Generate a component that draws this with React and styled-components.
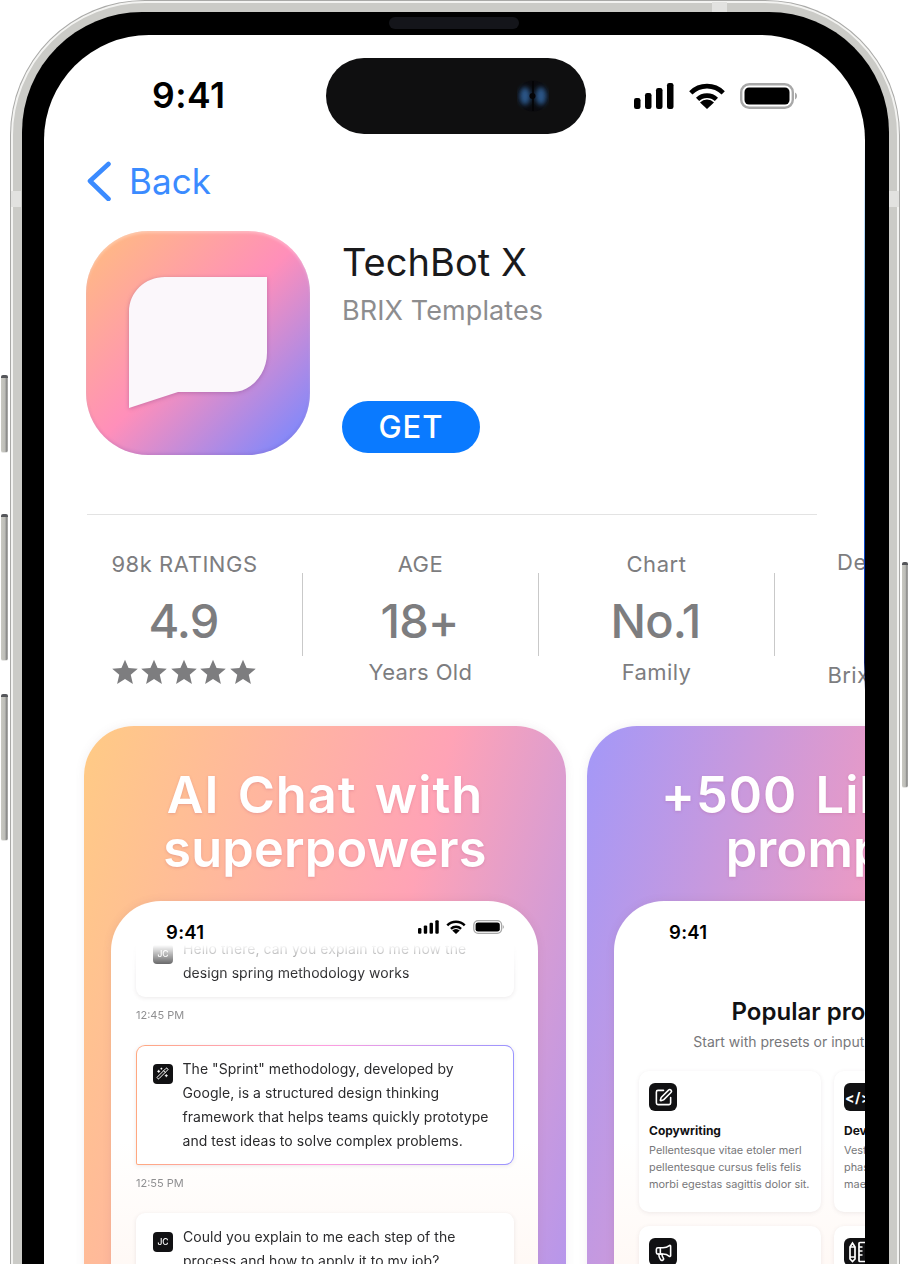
import React from "react";
import styled, { createGlobalStyle } from "styled-components";
import { SquarePen, Megaphone, WandSparkles } from "lucide-react";

const Global = createGlobalStyle`
  html, body { margin: 0; padding: 0; background: #fff; }
  * { box-sizing: border-box; }
  body { font-family: Inter, "Liberation Sans", sans-serif; }
`;

const Page = styled.div`
  position: relative;
  width: 908px;
  height: 1264px;
  overflow: hidden;
  background: #fff;
  padding: 1px 0 0 11px;
`;
const SideButton = styled.div`
  position: absolute;
  top: ${(p) => p.$top}px;
  height: ${(p) => p.$h}px;
  ${(p) => (p.$right ? "left: 902px; width: 6px;" : "left: 1px; width: 7px;")}
  border-radius: 2px;
  border-top: 3px solid #55565a;
  border-bottom: 1px solid #e6e6e4;
  background: linear-gradient(90deg, #c9c9c2 0%, #bdbdb8 55%, #808080 85%, #c9c9c5 100%);
`;
const Frame = styled.div`
  position: relative;
  width: 888px;
  height: 1500px;
  border: 2px solid #f3f3f1;
  border-radius: 134px;
  padding: 9px 8px 0 9px;
  background: #cbcbc7;
  box-shadow: 0 0 0 1px #a9a9a7;
`;
const AntennaBand = styled.div`
  position: absolute;
  background: #e2e2e0;
  ${(p) => p.$pos}
`;
const Bezel = styled.div`
  position: relative;
  width: 867px;
  height: 1480px;
  background: #000;
  border-radius: 120px;
  padding: 23px 24px 0 22px;
`;
const Speaker = styled.div`
  position: absolute;
  left: 367px;
  top: 5px;
  width: 130px;
  height: 12px;
  border-radius: 6px;
  background: #14151a;
`;
const Screen = styled.div`
  position: relative;
  width: 821px;
  height: 1440px;
  background: #fff;
  border-radius: 105px;
  overflow: hidden;
  &::after {
    content: "";
    position: absolute;
    right: 0;
    top: 105px;
    width: 1px;
    height: 550px;
    background: linear-gradient(180deg, transparent 0%, #8cc4f5 25%, #0a7aff 50%, #0a3ec0 78%, #0a1a60 95%, transparent 100%);
  }
`;
const StatusBar = styled.div`
  display: flex;
  align-items: center;
  height: 76px;
  margin-top: 23px;
  padding-left: 108px;
`;
const Time = styled.div`
  width: 174px;
  font-size: 35.5px;
  font-weight: 600;
  line-height: 40px;
  color: #000;
  letter-spacing: 0.5px;
`;
const Island = styled.div`
  width: 260px;
  height: 76px;
  border-radius: 38px;
  background: #0f0f10;
  display: flex;
  align-items: center;
  justify-content: flex-end;
  padding-right: 37px;
`;
const StatusIcons = styled.div`
  display: flex;
  align-items: center;
  gap: ${(p) => p.$gap}px;
  margin-left: ${(p) => p.$ml}px;
`;
const BackRow = styled.div`
  display: flex;
  align-items: center;
  height: 38px;
  margin-top: 28px;
  padding-left: 43px;
  gap: 18px;
  color: #3b8bff;
`;
const BackText = styled.span`
  font-size: 35px;
  line-height: 38px;
  letter-spacing: 0.1px;
`;
const AppRow = styled.div`
  display: flex;
  margin-top: 31px;
  padding-left: 42px;
  gap: 32px;
`;
const AppIcon = styled.div`
  width: 224px;
  height: 224px;
  border-radius: 62px;
  background: linear-gradient(135deg, #ffbe7e 0%, #ff8fba 50%, #a88ae8 80%, #7688ff 97%);
  box-shadow: inset 0 2px 3px rgba(255, 255, 255, 0.3), inset 0 -2px 3px rgba(110, 60, 150, 0.16);
  flex-shrink: 0;
`;
const AppInfo = styled.div`
  display: flex;
  flex-direction: column;
  align-items: flex-start;
  height: 224px;
`;
const AppTitle = styled.div`
  margin-top: 8px;
  font-size: 38px;
  line-height: 46px;
  color: #1a1a1c;
  letter-spacing: 0.05px;
`;
const AppDev = styled.div`
  margin-top: 9px;
  font-size: 27px;
  line-height: 34px;
  color: #8d8d8f;
  letter-spacing: 0.1px;
`;
const GetButton = styled.div`
  margin-top: auto;
  margin-bottom: 2px;
  width: 138px;
  height: 52px;
  border-radius: 26px;
  background: #0a7aff;
  color: #fff;
  display: flex;
  align-items: center;
  justify-content: center;
  padding-bottom: 2px;
  font-size: 31px;
  font-weight: 500;
  letter-spacing: 1px;
`;
const Divider = styled.div`
  margin: 59px 0 0 43px;
  width: 730px;
  height: 1px;
  background: #e3e3e3;
`;
const StatsRow = styled.div`
  display: flex;
  align-items: flex-start;
  height: 171px;
  padding-left: 23px;
`;
const Stat = styled.div`
  width: 235px;
  flex-shrink: 0;
  display: flex;
  flex-direction: column;
  align-items: center;
  padding-top: ${(p) => (p.$shift ? 33 : 35)}px;
  color: #7d7d7f;
  white-space: nowrap;
`;
const StatLabel = styled.div`
  font-size: 22px;
  line-height: 28px;
  letter-spacing: 0.55px;
`;
const StatValue = styled.div`
  margin: 15px 2px 0 0;
  height: 56px;
  font-size: 47px;
  line-height: 56px;
  font-weight: 500;
  letter-spacing: -0.9px;
`;
const StatSub = styled.div`
  margin-top: ${(p) => (p.$shift ? 14 : 9)}px;
  font-size: 22px;
  line-height: 28px;
  letter-spacing: 0.4px;
`;
const Stars = styled.div`
  margin: 10px 2px 0 0;
  display: flex;
  gap: 3.5px;
`;
const StatDivider = styled.div`
  flex-shrink: 0;
  width: 1px;
  height: 83px;
  margin-top: 58px;
  background: #c9c9c9;
`;
const Gallery = styled.div`
  display: flex;
  gap: 21px;
  margin-top: 40px;
  padding-left: 40px;
`;
const ShotCard = styled.div`
  flex-shrink: 0;
  width: 482px;
  height: 720px;
  border-radius: 50px;
  padding-top: 42px;
  overflow: hidden;
  box-shadow: 0 0 10px rgba(120, 100, 120, 0.1);
  background: linear-gradient(105deg, ${(p) => p.$stops});
`;
const ShotLine = styled.div`
  font-size: 50.5px;
  line-height: 54px;
  font-weight: 600;
  letter-spacing: ${(p) => p.$ls}px;
  word-spacing: 4.5px;
  color: #fff;
  text-align: center;
  white-space: nowrap;
  text-shadow: 0 1px 3px rgba(170, 70, 110, 0.25);
`;
const InnerPhone = styled.div`
  margin: 25px 0 0 27px;
  width: 427px;
  height: 600px;
  border-radius: 50px 50px 0 0;
  background: linear-gradient(180deg, #fff 40%, #fff6f1 70%);
  box-shadow: 0 0 8px rgba(120, 80, 100, 0.12);
`;
const InnerStatus = styled.div`
  display: flex;
  align-items: flex-start;
  height: 44px;
  padding: 19px 0 0 55px;
`;
const InnerTime = styled.div`
  width: 252px;
  font-size: 18.5px;
  line-height: 24px;
  font-weight: 600;
  color: #000;
  letter-spacing: 0.3px;
`;
const ChatList = styled.div`
  height: 400px;
  padding: 0 24px 0 25px;
  overflow: hidden;
  mask-image: linear-gradient(180deg, transparent 0, #000 30px);
`;
const Bubble = styled.div`
  display: flex;
  gap: 10px;
  margin-top: ${(p) => p.$mt || 0}px;
  padding: 12px 17px 12px 17px;
  border-radius: 9px;
  background: #fff;
  box-shadow: 0 1px 4px rgba(90, 70, 80, 0.12);
`;
const AccentBubble = styled(Bubble)`
  border: 1.5px solid transparent;
  border-radius: 9px 9px 9px 2px;
  padding: 10.5px 15.5px 11.5px;
  background: linear-gradient(#fff, #fff) padding-box,
    linear-gradient(90deg, #ffa880 0%, #ff9ee0 50%, #9a94ff 100%) border-box;
`;
const Avatar = styled.div`
  flex-shrink: 0;
  width: 20px;
  height: 20px;
  margin-top: 7px;
  border-radius: 4px;
  background: #111113;
  color: #fff;
  font-size: 8.5px;
  font-weight: 500;
  display: flex;
  align-items: center;
  justify-content: center;
`;
const BubbleText = styled.div`
  font-size: 14px;
  line-height: 24px;
  color: #2b2b2d;
  letter-spacing: 0.05px;
`;
const Stamp = styled.div`
  margin: 9px 0 21px;
  font-size: 11px;
  line-height: 18px;
  color: #8f8f91;
`;
const PromptHead = styled.div`
  margin-top: 52px;
  font-size: 24px;
  line-height: 30px;
  font-weight: 600;
  color: #111113;
  text-align: center;
  white-space: nowrap;
`;
const PromptSub = styled.div`
  margin-top: 5px;
  font-size: 14px;
  line-height: 20px;
  color: #77777a;
  text-align: center;
  white-space: nowrap;
`;
const PromptGrid = styled.div`
  display: grid;
  grid-template-columns: 182px 182px;
  grid-auto-rows: 141px;
  gap: 14px 13px;
  margin-top: 19px;
  padding-left: 25px;
`;
const PromptCard = styled.div`
  padding: 12px 10px;
  border-radius: 10px;
  background: #fff;
  box-shadow: 0 1px 4px rgba(90, 70, 80, 0.1);
`;
const PromptIcon = styled.div`
  width: 28px;
  height: 28px;
  border-radius: 6px;
  background: #111113;
  color: #fff;
  display: flex;
  align-items: center;
  justify-content: center;
  font-size: 14px;
  font-weight: 700;
  letter-spacing: 0.5px;
`;
const PromptTitle = styled.div`
  margin-top: 12px;
  font-size: 12px;
  line-height: 16px;
  font-weight: 700;
  color: #111113;
`;
const PromptDesc = styled.div`
  margin-top: 3px;
  font-size: 10.9px;
  line-height: 17px;
  color: #77777a;
  white-space: nowrap;
`;

const Signal = ({ w = 40, h = 26 }) => (
  <svg width={w} height={h} viewBox="0 0 40 26" fill="#000">
    <rect x="0" y="15" width="6.5" height="11" rx="2.2" />
    <rect x="11" y="10" width="6.5" height="16" rx="2.2" />
    <rect x="22" y="5" width="6.5" height="21" rx="2.2" />
    <rect x="33" y="0" width="6.5" height="26" rx="2.2" />
  </svg>
);
const Wifi = ({ w = 36, h = 26 }) => (
  <svg width={w} height={h} viewBox="0 0 36 26" fill="none" stroke="#000" strokeWidth="4.6">
    <path d="M1.8 9.8 A23 23 0 0 1 34.2 9.8" />
    <path d="M8.6 16.4 A13.5 13.5 0 0 1 27.4 16.4" />
    <path d="M18 26 L11 19.4 A10 10 0 0 1 25 19.4 Z" fill="#000" stroke="none" />
  </svg>
);
const Battery = ({ w = 57, h = 26 }) => (
  <svg width={w} height={h} viewBox="0 0 57 26">
    <rect x="1.2" y="1.2" width="51.6" height="23.6" rx="8" fill="none" stroke="#a8a8a8" strokeWidth="2.4" />
    <rect x="4.5" y="4.5" width="45" height="17" rx="4.5" fill="#000" />
    <path d="M55 9.5 C56.5 10.5 57 11.5 57 13 C57 14.5 56.5 15.5 55 16.5 Z" fill="#a8a8a8" />
  </svg>
);
const Camera = () => (
  <svg width="32" height="34" viewBox="0 0 32 34">
    <defs>
      <filter id="camBlur" x="-60%" y="-60%" width="220%" height="220%">
        <feGaussianBlur stdDeviation="2.4" />
      </filter>
    </defs>
    <circle cx="16" cy="17" r="15.5" fill="#0a0a0e" />
    <g filter="url(#camBlur)" fill="#2a5688">
      <ellipse cx="8" cy="17" rx="5.5" ry="9" />
      <ellipse cx="24" cy="17" rx="5.5" ry="9" />
    </g>
    <rect x="15.2" y="2" width="1.6" height="30" fill="#040406" />
    <circle cx="15.5" cy="17" r="3" fill="#040406" />
  </svg>
);
const Star = () => (
  <svg width="26" height="26" viewBox="0 0 24 24" fill="#7d7d7f">
    <path d="M12 0.6 L15.3 8.4 L23.8 9.1 L17.3 14.6 L19.3 23 L12 18.5 L4.7 23 L6.7 14.6 L0.2 9.1 L8.7 8.4 Z" />
  </svg>
);
const PencilRulerIcon = () => (
  <svg width="20" height="22" viewBox="0 0 20 22" fill="none" stroke="#fff" strokeWidth="1.7">
    <path d="M2 6 L4.5 2 L7 6 V18 L4.5 20.5 L2 18 Z" />
    <path d="M2 6 H7 M2 16 H7" />
    <rect x="11" y="1.5" width="7" height="19" rx="1" />
    <path d="M11 6 H14.5 M11 10 H14.5 M11 14 H14.5" />
  </svg>
);

export default function App() {
  return (
    <Page>
      <Global />
      <SideButton $top={375} $h={78} />
      <SideButton $top={514} $h={147} />
      <SideButton $top={694} $h={147} />
      <SideButton $right $top={562} $h={226} />
      <Frame>
        <AntennaBand $pos="left: -2px; top: 188px; width: 10px; height: 16px;" />
        <AntennaBand $pos="right: -2px; top: 188px; width: 11px; height: 16px;" />
        <AntennaBand $pos="left: 699px; top: -1px; width: 15px; height: 10px;" />
        <Bezel>
          <Speaker />
          <Screen>
            <StatusBar>
              <Time>9:41</Time>
              <Island>
                <Camera />
              </Island>
              <StatusIcons $gap={15} $ml={48}>
                <Signal />
                <Wifi />
                <Battery />
              </StatusIcons>
            </StatusBar>

            <BackRow>
              <svg width="24" height="40" viewBox="0 0 24 40" fill="none" stroke="#3b8bff" strokeWidth="4.6" strokeLinecap="round" strokeLinejoin="round">
                <path d="M21.5 3 L3 20 L21.5 38" />
              </svg>
              <BackText>Back</BackText>
            </BackRow>

            <AppRow>
              <AppIcon>
                <svg width="224" height="224" viewBox="0 0 224 224" style={{ filter: "drop-shadow(0 1px 2px rgba(120,60,130,.4))" }}>
                  <path d="M43 81 C43 61 59 46 79 46 L181 46 L181 122 C181 143 165 161 147 161 L92 161 L43 177 Z" fill="#fbf7fb" />
                </svg>
              </AppIcon>
              <AppInfo>
                <AppTitle>TechBot X</AppTitle>
                <AppDev>BRIX Templates</AppDev>
                <GetButton>GET</GetButton>
              </AppInfo>
            </AppRow>

            <Divider />

            <StatsRow>
              <Stat>
                <StatLabel>98k RATINGS</StatLabel>
                <StatValue>4.9</StatValue>
                <Stars>
                  <Star /><Star /><Star /><Star /><Star />
                </Stars>
              </Stat>
              <StatDivider />
              <Stat>
                <StatLabel>AGE</StatLabel>
                <StatValue>18+</StatValue>
                <StatSub>Years Old</StatSub>
              </Stat>
              <StatDivider />
              <Stat>
                <StatLabel>Chart</StatLabel>
                <StatValue>No.1</StatValue>
                <StatSub>Family</StatSub>
              </Stat>
              <StatDivider />
              <Stat $shift>
                <StatLabel>Developer</StatLabel>
                <StatValue />
                <StatSub $shift>Brix Agency</StatSub>
              </Stat>
            </StatsRow>

            <Gallery>
              <ShotCard $stops="#ffcb85 0%, #ffa3b6 55%, #a994f5 100%">
                <ShotLine $ls={1}>AI Chat with</ShotLine>
                <ShotLine $ls={0.2}>superpowers</ShotLine>
                <InnerPhone>
                  <InnerStatus>
                    <InnerTime>9:41</InnerTime>
                    <StatusIcons $gap={7} $ml={0}>
                      <Signal w={21} h={14} />
                      <Wifi w={20} h={14} />
                      <Battery w={31} h={14} />
                    </StatusIcons>
                  </InnerStatus>
                  <ChatList>
                    <Bubble $mt={-20}>
                      <Avatar>JC</Avatar>
                      <BubbleText>
                        Hello there, can you explain to me how the
                        <br />
                        design spring methodology works
                      </BubbleText>
                    </Bubble>
                    <Stamp>12:45 PM</Stamp>
                    <AccentBubble>
                      <Avatar>
                        <WandSparkles size={13} strokeWidth={1.8} />
                      </Avatar>
                      <BubbleText>
                        The "Sprint" methodology, developed by
                        <br />
                        Google, is a structured design thinking
                        <br />
                        framework that helps teams quickly prototype
                        <br />
                        and test ideas to solve complex problems.
                      </BubbleText>
                    </AccentBubble>
                    <Stamp>12:55 PM</Stamp>
                    <Bubble>
                      <Avatar>JC</Avatar>
                      <BubbleText>
                        Could you explain to me each step of the
                        <br />
                        process and how to apply it to my job?
                      </BubbleText>
                    </Bubble>
                  </ChatList>
                </InnerPhone>
              </ShotCard>

              <ShotCard $stops="#a398f8 0%, #ee9ac2 50%, #ffc080 100%">
                <ShotLine $ls={1}>+500 Library</ShotLine>
                <ShotLine $ls={0.2}>prompts</ShotLine>
                <InnerPhone>
                  <InnerStatus>
                    <InnerTime>9:41</InnerTime>
                  </InnerStatus>
                  <PromptHead>Popular prompts</PromptHead>
                  <PromptSub>Start with presets or input your own idea</PromptSub>
                  <PromptGrid>
                    <PromptCard>
                      <PromptIcon><SquarePen size={19} strokeWidth={2} /></PromptIcon>
                      <PromptTitle>Copywriting</PromptTitle>
                      <PromptDesc>
                        Pellentesque vitae etoler merl
                        <br />
                        pellentesque cursus felis felis
                        <br />
                        morbi egestas sagittis dolor sit.
                      </PromptDesc>
                    </PromptCard>
                    <PromptCard>
                      <PromptIcon>&lt;/&gt;</PromptIcon>
                      <PromptTitle>Development</PromptTitle>
                      <PromptDesc>
                        Vestibulum ante ipsum primis
                        <br />
                        phasellus cursus felis felis
                        <br />
                        maecenas sagittis dolor sit.
                      </PromptDesc>
                    </PromptCard>
                    <PromptCard>
                      <PromptIcon><Megaphone size={19} strokeWidth={2} /></PromptIcon>
                    </PromptCard>
                    <PromptCard>
                      <PromptIcon><PencilRulerIcon /></PromptIcon>
                    </PromptCard>
                  </PromptGrid>
                </InnerPhone>
              </ShotCard>
            </Gallery>
          </Screen>
        </Bezel>
      </Frame>
    </Page>
  );
}
